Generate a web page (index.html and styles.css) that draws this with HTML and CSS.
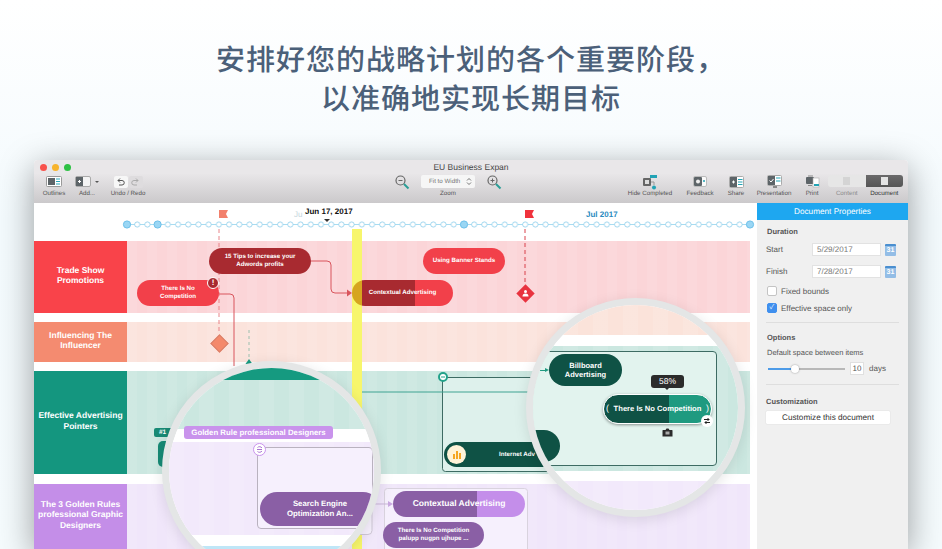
FILE: index.html
```html
<!DOCTYPE html>
<html lang="zh-CN">
<head>
  <meta charset="UTF-8" />
  <meta name="viewport" content="width=device-width, initial-scale=1.0" />
  <title>EU Business Expan</title>
  <link rel="stylesheet" href="styles.css">
</head>
<body>
  <h1 class="hero">安排好您的战略计划的各个重要阶段&#65292;<br>以准确地实现长期目标</h1>

  <div class="window">
    <div class="titlebar">
      <span class="light red"></span><span class="light yellow"></span><span class="light green"></span>
      <span class="doc-title">EU Business Expan</span>
    </div>

    <div class="toolbar">
      <div class="tool w-outlines">
        <svg width="16" height="11" viewBox="0 0 16 11"><rect x=".5" y=".5" width="15" height="10" rx="1" fill="#fff" stroke="#999"/><rect x="2" y="2" width="7" height="7" fill="#5d6468"/><path d="M10 3h4M10 5.500h4M10 8h4" stroke="#2aa5b8"/></svg>
        <span>Outlines</span>
      </div>
      <div class="tool w-add">
        <svg width="24" height="11" viewBox="0 0 24 11"><rect x=".5" y=".5" width="15" height="10" rx="1.500" fill="#f4f4f4" stroke="#aaa"/><rect x="1" y="1" width="7" height="9" fill="#5d6468"/><path d="M3 5.500h3M4.500 4v3" stroke="#fff"/><path d="M20 5h4l-2 2z" fill="#555"/></svg>
        <span>Add...</span>
      </div>
      <div class="tool w-undo">
        <div class="undo-box">
          <span class="undo-btn"><svg width="9" height="9" viewBox="0 0 9 9"><path d="M2 3.500h4a2 2 0 0 1 0 4.500H3M2 3.500l2-2M2 3.500l2 2" fill="none" stroke="#555"/></svg></span>
          <span class="undo-btn off"><svg width="9" height="9" viewBox="0 0 9 9"><path d="M7 3.500H3a2 2 0 0 0 0 4.500h3M7 3.500l-2-2M7 3.500l-2 2" fill="none" stroke="#aaa"/></svg></span>
        </div>
        <span>Undo / Redo</span>
      </div>

      <div class="zoom-group">
        <div class="zoom-row">
          <svg width="16" height="16" viewBox="0 0 16 16"><circle cx="6.500" cy="6.500" r="4.500" fill="none" stroke="#666" stroke-width="1.200"/><path d="M4.500 6.500h4" stroke="#666"/><path d="M10 10l4.500 4.500" stroke="#2a9d96" stroke-width="2"/></svg>
          <div class="zoom-select">Fit to Width
            <svg width="6" height="9" viewBox="0 0 6 9"><path d="M1 3.500l2-2 2 2M1 5.500l2 2 2-2" fill="none" stroke="#555" stroke-width=".8"/></svg>
          </div>
          <svg width="16" height="16" viewBox="0 0 16 16"><circle cx="6.500" cy="6.500" r="4.500" fill="none" stroke="#666" stroke-width="1.200"/><path d="M4.500 6.500h4M6.500 4.500v4" stroke="#666"/><path d="M10 10l4.500 4.500" stroke="#2a9d96" stroke-width="2"/></svg>
        </div>
        <span>Zoom</span>
      </div>

      <div class="right-tools">
        <div class="tool w-hide">
          <svg width="16" height="16" viewBox="0 0 16 16"><rect x="1" y="4" width="8" height="8" rx="1" fill="#666"/><rect x="3" y="6" width="4" height="4" fill="#ddd"/><rect x="8" y="1" width="7" height="3" fill="#22a3b5"/><circle cx="12" cy="13.500" r="2" fill="#22a3b5"/><path d="M9 8h3v3" fill="none" stroke="#999"/></svg>
          <span>Hide Completed</span>
        </div>
        <div class="tool w-feedback">
          <svg width="14" height="11" viewBox="0 0 14 11"><rect x=".5" y=".5" width="13" height="10" rx="1.500" fill="#fafafa" stroke="#bbb"/><rect x="1" y="1" width="8" height="9" rx="1" fill="#5d6468"/><circle cx="5" cy="5.500" r="2" fill="#eee"/><circle cx="11" cy="5" r="1" fill="#22a3b5"/></svg>
          <span>Feedback</span>
        </div>
        <div class="tool w-share">
          <svg width="15" height="12" viewBox="0 0 15 12"><rect x=".5" y=".5" width="14" height="11" rx="1" fill="#fff" stroke="#aaa"/><rect x="1" y="1" width="7" height="10" fill="#5d6468"/><path d="M3 6h3M4.500 4.500v3" stroke="#fff"/><path d="M9 3.500h4.500M9 6h4.500M9 8.500h4.500" stroke="#22a3b5" stroke-width="1.200"/></svg>
          <span>Share</span>
        </div>
        <div class="tool w-present">
          <svg width="15" height="14" viewBox="0 0 15 14"><rect x=".5" y=".5" width="14" height="10" rx="1" fill="#fff" stroke="#aaa"/><rect x="1" y="1" width="7" height="9" fill="#5d6468"/><path d="M2.500 5.500l1.500 1.500 2.500-3" fill="none" stroke="#fff"/><path d="M9 3h4.500M9 6h4.500" stroke="#22a3b5" stroke-width="1.200"/><path d="M6 12h4" stroke="#888" stroke-width="2"/></svg>
          <span>Presentation</span>
        </div>
        <div class="tool w-print">
          <svg width="15" height="14" viewBox="0 0 15 14"><rect x="1" y="2" width="8" height="7" rx="1" fill="#5d6468"/><rect x="8" y="3" width="6" height="9" fill="#fff" stroke="#aaa" stroke-width=".6"/><path d="M9 10h5" stroke="#22a3b5" stroke-width="2"/><path d="M3 1h5M3 10.500h4" stroke="#888"/></svg>
          <span>Print</span>
        </div>
        <div class="inspector-switch">
          <div class="switch-btns">
            <div class="switch-btn"><i class="page-ico"></i></div>
            <div class="switch-btn on"><i class="page-ico"></i></div>
          </div>
          <div class="switch-labels"><span class="dim">Content</span><span>Document</span></div>
        </div>
      </div>
    </div>

    <div class="workspace">
      <div class="main">
        <div class="head"></div>

        <div class="lane trade">
          <div class="lane-name">Trade Show<br>Promotions</div>
          <div class="lane-track"></div>
        </div>
        <div class="lane influence">
          <div class="lane-name">Influencing The<br>Influencer</div>
          <div class="lane-track"></div>
        </div>
        <div class="lane effective">
          <div class="lane-name">Effective Advertising<br>Pointers</div>
          <div class="lane-track"></div>
        </div>
        <div class="lane golden">
          <div class="lane-name">The 3 Golden Rules<br>professional Graphic<br>Designers</div>
          <div class="lane-track"></div>
        </div>

        <!-- everything on the timeline canvas -->
        <div class="canvas">
          <div class="today-bar"></div>

          <svg class="wires" width="723" height="346" viewBox="34 203 723 346">
            <defs>
              <pattern id="dots" x="122" y="219" width="10.21" height="11" patternUnits="userSpaceOnUse">
                <circle cx="5" cy="5.500" r="2.600" fill="#fff" stroke="#8accea" stroke-width=".8"/>
              </pattern>
            </defs>
            <path d="M127 224.500H750" stroke="#a8dcf1"/>
            <rect x="122" y="219" width="628" height="11" fill="url(#dots)"/>
            <g fill="#9ad6f4" stroke="#6cc0ea">
              <circle cx="127" cy="224.500" r="3.600"/>
              <circle cx="157.600" cy="224.500" r="3.600"/>
              <circle cx="464" cy="224.500" r="3.600"/>
              <circle cx="750" cy="224.500" r="3.600"/>
            </g>

            <path d="M219 224V210h9l-2 4 2 4h-9" fill="#f2806c"/>
            <path d="M525 224V210h9l-2 4 2 4h-9" fill="#f0323c"/>
            <path d="M219 229V333" stroke="#e8858a" stroke-dasharray="4 3"/>
            <path d="M525 229V284" stroke="#d8434d" stroke-dasharray="4 3"/>
            <path d="M249 330V358" stroke="#9dbfae" stroke-dasharray="3 3"/>
            <path d="M245.500 364l3.500-5 3.500 5z" fill="#159a80"/>

            <path d="M219 294h11a4 4 0 0 1 4 4V366" fill="none" stroke="#d9555d"/>
            <path d="M311 261h16a4 4 0 0 1 4 4v24a4 4 0 0 0 4 4h13" fill="none" stroke="#d9555d"/>
            <path d="M347 289.500l5 3.500-5 3.500z" fill="#d9555d"/>

            <rect x="442.500" y="377.500" width="140" height="94" rx="3" fill="#def1ec" stroke="#3d6b63"/>
            <path d="M362 392H530" stroke="#3fa392"/>
            <circle cx="443" cy="377" r="4" fill="#fff" stroke="#22a28a" stroke-width="2"/>
            <path d="M441 377h4" stroke="#22a28a"/>

            <rect x="250" y="447.500" width="122" height="87" rx="4" fill="#f6f0fd" stroke="#cfc8d6"/>
            <rect x="384.500" y="488.500" width="143" height="70" rx="3" fill="#f6f0fd" stroke="#d9d3de"/>
            <path d="M372 504H388" stroke="#c9b5d8"/>
            <path d="M388 501l5 3-5 3z" fill="#c9a8e0"/>
          </svg>

          <div class="stamp date-ghost">Ju</div>
          <div class="stamp date-now">Jun 17, 2017</div>
          <div class="date-caret"></div>
          <div class="stamp date-month">Jul 2017</div>

          <div class="pill tips">15 Tips to increase your<br>Adwords profits</div>
          <div class="pill no-comp">There Is No<br>Competition</div>
          <div class="pill banner">Using Banner Stands</div>
          <div class="pill contextual">Contextual Advertising</div>
          <div class="alert">!</div>
          <div class="mile orange"></div>
          <div class="mile red"><svg width="9" height="9" viewBox="0 0 9 9"><circle cx="4.500" cy="2.500" r="1.500" fill="#fff"/><path d="M1.500 7.500a3 3 0 0 1 6 0z" fill="#fff"/></svg></div>

          <div class="rank">#1</div>
          <div class="stub"></div>

          <div class="pill net-base">
            <i class="net-ico"><svg width="11" height="11" viewBox="0 0 11 11"><path d="M2 10V5h2v5zM5 10V2h2v8zM8 10V4h2v6z" fill="#f5a623"/></svg></i>
            <span>Internet Adv</span>
          </div>

          <div class="pill ctx-purple">Contextual Advertising</div>
          <div class="pill no-comp-purple">There Is No Competition<br>palupp nugpn ujhupe ...</div>

          <!-- left magnifier -->
          <div class="lens lens-left">
            <div class="band-teal"></div>
            <div class="band-mint"></div>
            <div class="band-white"></div>
            <div class="band-purple"></div>
            <div class="band-white2"></div>
            <div class="band-sky"></div>
            <div class="inner-box left-box"></div>
            <div class="golden-tag">Golden Rule professional Designers</div>
            <div class="golden-dot"><svg width="9" height="9" viewBox="0 0 9 9"><path d="M2 4.500h5M2.500 2.500a3 3 0 0 1 4.500 .5M2.500 6.500a3 3 0 0 0 4.500-.5" fill="none" stroke="#a974d0"/></svg></div>
            <div class="pill search">Search Engine<br>Optimization An...</div>
          </div>

          <!-- right magnifier -->
          <div class="lens lens-right">
            <div class="band-peach"></div>
            <div class="band-white3"></div>
            <div class="band-mint2"></div>
            <div class="band-white4"></div>
            <div class="band-purple2"></div>
            <div class="inner-box right-box"></div>
            <div class="arrow-in"></div>
            <div class="pill billboard">Billboard<br>Advertising</div>
            <div class="progress-tip">58%</div>
            <div class="pill selected">There Is No Competition</div>
            <div class="swap"><svg width="8" height="8" viewBox="0 0 8 8"><path d="M1 2.500h5M4.500 1l1.500 1.500L4.500 4M7 5.500H2M3.500 4L2 5.500 3.500 7" fill="none" stroke="#222"/></svg></div>
            <div class="cam"><svg width="11" height="9" viewBox="0 0 11 9"><path d="M1 2h2.500l1-1.500h2l1 1.500H10a.5 .5 0 0 1 .5 .5v6H.5v-6A.5 .5 0 0 1 1 2z" fill="#2b2b2b"/><rect x="3.500" y="3.500" width="4" height="3" fill="#aaa"/></svg></div>
            <div class="pill net-zoom"></div>
          </div>
        </div>
      </div>

      <aside class="panel">
        <div class="panel-head">Document Properties</div>
        <div class="panel-body">
          <div class="sec-title first">Duration</div>
          <div class="date-row first-row">
            <span class="date-label">Start</span>
            <span class="date-input">5/29/2017</span>
            <span class="cal">31</span>
          </div>
          <div class="date-row">
            <span class="date-label">Finish</span>
            <span class="date-input">7/28/2017</span>
            <span class="cal">31</span>
          </div>
          <div class="check-row first-check"><i class="box"></i>Fixed bounds</div>
          <div class="check-row"><i class="box checked">✓</i>Effective space only</div>
          <div class="rule"></div>
          <div class="sec-title">Options</div>
          <div class="hint">Default space between items</div>
          <div class="slider-row">
            <div class="slider"><i class="thumb"></i></div>
            <span class="num">10</span>
            <span>days</span>
          </div>
          <div class="rule"></div>
          <div class="sec-title custom">Customization</div>
          <div class="wide-btn">Customize this document</div>
        </div>
      </aside>
    </div>
  </div>
</body>
</html>
```

FILE: styles.css
```css
html, body {
  margin: 0;
  height: 549px;
  overflow: hidden;
}
body {
  background: linear-gradient(#fff, #f3fafd 40%, #f5fbfd);
  font-family: "Liberation Sans", Arial, sans-serif;
  text-rendering: geometricPrecision;
}
.hero {
  margin: 0;
  padding-top: 39px;
  height: 160px;
  box-sizing: border-box;
  text-align: center;
  font-family: "Noto Sans CJK SC", sans-serif;
  font-size: 29px;
  font-weight: 500;
  line-height: 39px;
  letter-spacing: 1px;
  color: #4b6079;
}

/* window */
.window {
  width: 874px;
  height: 389px;
  margin-left: 34px;
  border-radius: 4px 4px 0 0;
  background: #fff;
  box-shadow: 0 8px 34px rgba(0, 0, 0, .38);
  overflow: hidden;
}
.titlebar {
  height: 10px;
  padding: 4px 0 0 6px;
  display: flex;
  gap: 5px;
  position: relative;
  background: #e9e7e9;
}
.light {
  width: 7px;
  height: 7px;
  border-radius: 50%;
}
.light.red { background: #f8524c; }
.light.yellow { background: #f7b42e; }
.light.green { background: #2fc145; }
.doc-title {
  position: absolute;
  left: 0;
  right: 0;
  top: 2px;
  text-align: center;
  font-size: 8.500px;
  line-height: 10px;
  color: #444;
}
.toolbar {
  height: 29px;
  padding: 0 5px;
  display: flex;
  align-items: flex-start;
  background: linear-gradient(#e8e6e8, #cbc9cb);
  font-size: 6.200px;
  color: #555;
}
.tool {
  display: grid;
  grid-template-rows: 15px 8px;
  row-gap: 1px;
  align-items: center;
  justify-items: center;
  white-space: nowrap;
}
.tool span { line-height: 8px; }
.w-outlines { width: 30px; }
.w-add { width: 36px; }
.w-undo { width: 46px; }
.w-hide { width: 50px; }
.w-feedback { width: 50px; }
.w-share { width: 22px; }
.w-present { width: 54px; }
.w-print { width: 22px; }
.undo-box { display: flex; gap: 1px; }
.undo-btn {
  width: 14px;
  height: 12px;
  background: #f7f7f7;
  border-radius: 2px;
  display: flex;
  align-items: center;
  justify-content: center;
}
.undo-btn.off { background: #dedcde; }
.zoom-group {
  margin-left: 239px;
  width: 116px;
  display: grid;
  grid-template-rows: 15px 8px;
  row-gap: 1px;
  justify-items: center;
  align-items: center;
}
.zoom-group > span { line-height: 8px; }
.zoom-row {
  display: flex;
  align-items: center;
  gap: 11px;
}
.zoom-select {
  width: 54px;
  height: 13px;
  background: #f6f6f6;
  border-radius: 2px;
  display: flex;
  align-items: center;
  justify-content: space-between;
  box-sizing: border-box;
  padding: 0 3px 0 8px;
  color: #777;
}
.right-tools {
  margin-left: auto;
  display: flex;
}
.inspector-switch {
  margin-left: 5px;
  width: 75px;
}
.switch-btns {
  display: flex;
  height: 12px;
  border-radius: 3px;
  overflow: hidden;
  margin-top: 1px;
}
.switch-btn {
  flex: 1;
  background: #e6e6e6;
  display: flex;
  align-items: center;
  justify-content: center;
}
.switch-btn .page-ico {
  width: 7px;
  height: 8px;
  background: #d4d4d4;
}
.switch-btn.on { background: linear-gradient(#6b6a6b, #555); }
.switch-btn.on .page-ico { background: #e4e4e4; }
.switch-labels {
  display: flex;
  margin-top: 3px;
  line-height: 8px;
}
.switch-labels span { flex: 1; text-align: center; color: #333; }
.switch-labels .dim { color: #8b8b8b; }

/* main area */
.workspace {
  display: flex;
  height: 346px;
}
.main {
  width: 723px;
  position: relative;
  padding-right: 7px;
  box-sizing: border-box;
  overflow: hidden;
}
.head { height: 38px; }
.lane {
  display: flex;
  margin-bottom: 9px;
  color: #fff;
}
.lane-name {
  width: 93px;
  display: flex;
  align-items: center;
  justify-content: center;
  text-align: center;
  font-size: 8.500px;
  font-weight: bold;
  line-height: 10.400px;
  padding-bottom: 4px;
  box-sizing: border-box;
}
.lane-track {
  flex: 1;
  background-image: repeating-linear-gradient(90deg, rgba(255, 255, 255, .08) 0 10px, transparent 10px 20px);
}
.trade { height: 72px; }
.trade .lane-name { background: #f9434a; }
.trade .lane-track { background-color: #fbd5d8; }
.influence { height: 40px; }
.influence .lane-name { background: #f48b70; }
.influence .lane-track { background-color: #fbe3dc; }
.effective { height: 103px; margin-bottom: 10px; }
.effective .lane-name { background: #14967f; }
.effective .lane-track { background-color: #cbe7e0; }
.golden { height: 65px; margin-bottom: 0; }
.golden .lane-name { background: #c48ee8; }
.golden .lane-track { background-color: #f0e6fa; }

/* canvas: places here are the timeline content itself */
.canvas {
  position: absolute;
  inset: 0;
}
.wires {
  position: absolute;
  left: 0;
  top: 0;
}
.today-bar {
  position: absolute;
  left: 318px;
  top: 26px;
  width: 10px;
  bottom: 0;
  background: #f7f66c;
}
.stamp {
  position: absolute;
  font-size: 8px;
  line-height: 10px;
  font-weight: bold;
  white-space: nowrap;
}
.date-ghost { left: 260px; top: 7px; color: #c5d6dc; font-weight: normal; }
.date-now { left: 271px; top: 4px; color: #111; }
.date-caret {
  position: absolute;
  left: 290px;
  top: 16px;
  border: 3px solid transparent;
  border-top: 3px solid #333;
  border-bottom: 0;
}
.date-month { left: 552px; top: 7px; color: #2a8bc0; }

.pill {
  position: absolute;
  display: flex;
  align-items: center;
  justify-content: center;
  text-align: center;
  border-radius: 14px;
  font-size: 6.200px;
  font-weight: bold;
  line-height: 7.600px;
  color: #fff;
  white-space: nowrap;
  box-sizing: border-box;
}
.tips { left: 175px; top: 45px; width: 102px; height: 26px; background: #a82a30; }
.no-comp { left: 103px; top: 77px; width: 82px; height: 26px; background: #f2404a; }
.banner { left: 389px; top: 45px; width: 82px; height: 26px; background: #f2404a; }
.contextual {
  left: 318px;
  top: 77px;
  width: 101px;
  height: 26px;
  background: linear-gradient(90deg, #d6a51f 10px, #a82a30 10px 63px, #f2404a 63px);
}
.alert {
  position: absolute;
  left: 173px;
  top: 74px;
  width: 12px;
  height: 12px;
  box-sizing: border-box;
  border: 1px solid #fff;
  border-radius: 50%;
  background: #a82a30;
  color: #fff;
  font-size: 8px;
  font-weight: bold;
  line-height: 10px;
  text-align: center;
}
.mile {
  position: absolute;
  width: 13px;
  height: 13px;
  transform: rotate(45deg);
  display: flex;
  align-items: center;
  justify-content: center;
}
.mile svg { transform: rotate(-45deg); }
.mile.orange { left: 178.500px; top: 133.500px; background: #f4896b; border: 1px solid #d9806a; box-sizing: border-box; }
.mile.red { left: 484.500px; top: 83.500px; background: #e8333f; }
.rank {
  position: absolute;
  left: 120px;
  top: 225px;
  width: 20px;
  height: 9px;
  border-radius: 2px;
  background: #178a75;
  color: #fff;
  font-size: 6.500px;
  font-weight: bold;
  line-height: 9px;
  padding-left: 5px;
  box-sizing: border-box;
}
.stub {
  position: absolute;
  left: 124px;
  top: 238px;
  width: 30px;
  height: 26px;
  border-radius: 5px;
  background: #178a75;
}
.net-base {
  left: 410px;
  top: 239px;
  width: 126px;
  height: 25px;
  background: #0f5245;
  justify-content: flex-start;
  padding-left: 3px;
}
.net-base span { margin-left: 33px; }
.net-ico {
  width: 19px;
  height: 19px;
  border-radius: 50%;
  background: #fff3d8;
  display: flex;
  align-items: center;
  justify-content: center;
}
.ctx-purple {
  left: 359px;
  top: 288px;
  width: 132px;
  height: 26px;
  font-size: 8.500px;
  background: linear-gradient(90deg, #8a5fa5 84px, #c48eea 84px);
}
.no-comp-purple {
  left: 349px;
  top: 319px;
  width: 101px;
  height: 26px;
  line-height: 8px;
  background: #8a5fa5;
}

/* magnifiers */
.lens {
  position: absolute;
  width: 219px;
  height: 219px;
  box-sizing: border-box;
  border: 7px solid #e4e6e6;
  border-radius: 50%;
  overflow: hidden;
  box-shadow: 0 3px 14px rgba(0, 0, 0, .1);
  background: #fff;
}
.lens-left { left: 128px; top: 158px; }
.lens-right { left: 492px; top: 95px; }
.band-teal { height: 12px; background: #159a80; }
.band-mint { height: 49px; background: #cbe7e0; }
.band-white { height: 13px; background: #fff; }
.band-purple { height: 93px; background: #f2e9fb; }
.band-white2 { height: 11px; background: #fff; }
.band-sky { height: 3px; background: #bfe6f7; }
.band-peach { height: 30px; background: #fbe3da; }
.band-white3 { height: 11px; background: #fff; }
.band-mint2 { height: 125px; background: #cbe7e0; }
.band-white4 { height: 10px; background: #fff; }
.band-purple2 { height: 30px; background: #f2e9fb; }
.band-mint, .band-purple, .band-peach, .band-mint2, .band-purple2 {
  background-image: repeating-linear-gradient(90deg, rgba(255, 255, 255, .1) 0 15px, transparent 15px 30px);
}
.inner-box {
  position: absolute;
  box-sizing: border-box;
  border-radius: 4px;
}
.left-box {
  left: 88px;
  top: 79px;
  width: 116px;
  height: 82px;
  background: #f6f0fd;
  border: 1px solid #b9b2bf;
}
.golden-tag {
  position: absolute;
  left: 15px;
  top: 58px;
  width: 149px;
  height: 13px;
  border-radius: 3px;
  background: #c993ec;
  color: #fff;
  font-size: 7.800px;
  font-weight: bold;
  line-height: 13px;
  text-align: center;
  white-space: nowrap;
}
.golden-dot {
  position: absolute;
  left: 84px;
  top: 75px;
  width: 13px;
  height: 13px;
  box-sizing: border-box;
  border: 1px solid #c993ec;
  border-radius: 50%;
  background: #fff;
  display: flex;
  align-items: center;
  justify-content: center;
}
.search {
  left: 91px;
  top: 124px;
  width: 120px;
  height: 34px;
  border-radius: 17px;
  background: #8a5fa5;
  font-size: 7.800px;
  line-height: 10px;
}
.right-box {
  left: -20px;
  top: 46px;
  width: 204px;
  height: 115px;
  background: #e2f3ee;
  border: 1px solid #3d6b63;
}
.arrow-in {
  position: absolute;
  left: 7px;
  top: 65px;
  width: 7px;
  height: 1px;
  background: #1f9a80;
}
.arrow-in::after {
  content: "";
  position: absolute;
  left: 5px;
  top: -2px;
  border-left: 4px solid #1f9a80;
  border-top: 2.500px solid transparent;
  border-bottom: 2.500px solid transparent;
}
.billboard {
  left: 16px;
  top: 49px;
  width: 73px;
  height: 32px;
  border-radius: 16px;
  background: #0f5245;
  font-size: 7.500px;
  line-height: 9px;
}
.progress-tip {
  position: absolute;
  left: 118px;
  top: 70px;
  width: 33px;
  height: 13px;
  border-radius: 3px;
  background: #2b2b2b;
  color: #fff;
  font-size: 8.500px;
  line-height: 13px;
  text-align: center;
}
.progress-tip::after {
  content: "";
  position: absolute;
  left: 14px;
  bottom: -2px;
  border-top: 2px solid #2b2b2b;
  border-left: 2.500px solid transparent;
  border-right: 2.500px solid transparent;
}
.selected {
  left: 70px;
  top: 89px;
  width: 109px;
  height: 30px;
  border-radius: 15px;
  border: 1px solid #fff;
  font-size: 7.600px;
  background: linear-gradient(90deg, #0f5245 65px, #1f9a80 65px);
  box-shadow: 0 1px 3px rgba(0, 0, 0, .4);
}
.selected::before,
.selected::after {
  position: absolute;
  top: 8px;
  font-size: 9px;
  font-weight: normal;
  line-height: 11px;
}
.selected::before { content: "("; left: 2px; }
.selected::after { content: ")"; right: 2px; }
.swap {
  position: absolute;
  left: 168px;
  top: 110px;
  width: 12px;
  height: 12px;
  border-radius: 50%;
  background: #fff;
  display: flex;
  align-items: center;
  justify-content: center;
}
.cam {
  position: absolute;
  left: 129px;
  top: 123px;
  width: 11px;
  height: 9px;
  display: flex;
}
.net-zoom {
  left: -60px;
  top: 125px;
  width: 87px;
  height: 32px;
  border-radius: 16px;
  background: #0f5245;
}

/* side panel */
.panel {
  width: 151px;
  background: #f0f0f0;
  font-size: 8px;
  color: #555;
}
.panel-head {
  height: 17px;
  background: #1ea7f0;
  color: #fff;
  font-size: 8.200px;
  line-height: 17px;
  text-align: center;
}
.panel-body { padding: 0 9px; }
.sec-title {
  margin: 10px 0 0 1px;
  font-size: 7.500px;
  font-weight: bold;
  line-height: 10px;
  color: #555;
}
.sec-title.first { margin-top: 7px; }
.sec-title.custom { margin-top: 12px; margin-left: 0; }
.date-row {
  display: flex;
  align-items: center;
  height: 13px;
  margin-top: 9px;
}
.first-row { margin-top: 6px; }
.date-label { width: 46px; }
.date-input {
  width: 69px;
  height: 13px;
  background: #fff;
  border: 1px solid #e2e2e2;
  box-sizing: border-box;
  padding-left: 4px;
  line-height: 11px;
  color: #777;
}
.cal {
  margin-left: 4px;
  width: 11px;
  height: 12px;
  border-radius: 1px;
  border-top: 2px solid #4a8fd0;
  box-sizing: border-box;
  background: #93bde6;
  color: #fff;
  font-size: 7px;
  font-weight: bold;
  line-height: 10px;
  text-align: center;
}
.check-row {
  display: flex;
  align-items: center;
  height: 10px;
  margin-top: 7px;
  margin-left: 1px;
}
.first-check { margin-top: 8px; }
.box {
  width: 8px;
  height: 8px;
  margin-right: 4px;
  border: 1px solid #c4c4c4;
  border-radius: 2px;
  background: #fff;
  font-style: normal;
  font-size: 7px;
  line-height: 8px;
  text-align: center;
  color: #fff;
}
.box.checked { background: #3f8fee; border-color: #3f8fee; }
.rule {
  height: 1px;
  margin-top: 9px;
  background: #dedede;
}
.hint { margin: 5px 0 0 1px; line-height: 10px; font-size: 7.500px; }
.slider-row {
  display: flex;
  align-items: center;
  height: 13px;
  margin-top: 4px;
  margin-left: 2px;
}
.slider {
  width: 77px;
  height: 2px;
  position: relative;
  background: linear-gradient(90deg, #4d9be8 27px, #b8b8b8 27px);
}
.thumb {
  position: absolute;
  left: 23px;
  top: -3px;
  width: 8px;
  height: 8px;
  border-radius: 50%;
  background: #fff;
  box-shadow: 0 0 2px rgba(0, 0, 0, .4);
}
.num {
  width: 14px;
  height: 13px;
  margin: 0 5px;
  background: #fff;
  border: 1px solid #e0e0e0;
  box-sizing: border-box;
  line-height: 11px;
  text-align: center;
}
.wide-btn {
  width: 124px;
  height: 13px;
  margin-top: 4px;
  background: #fff;
  border-radius: 1px;
  box-shadow: 0 0 1px rgba(0, 0, 0, .25);
  font-size: 8.200px;
  line-height: 13px;
  text-align: center;
  color: #333;
}
```
